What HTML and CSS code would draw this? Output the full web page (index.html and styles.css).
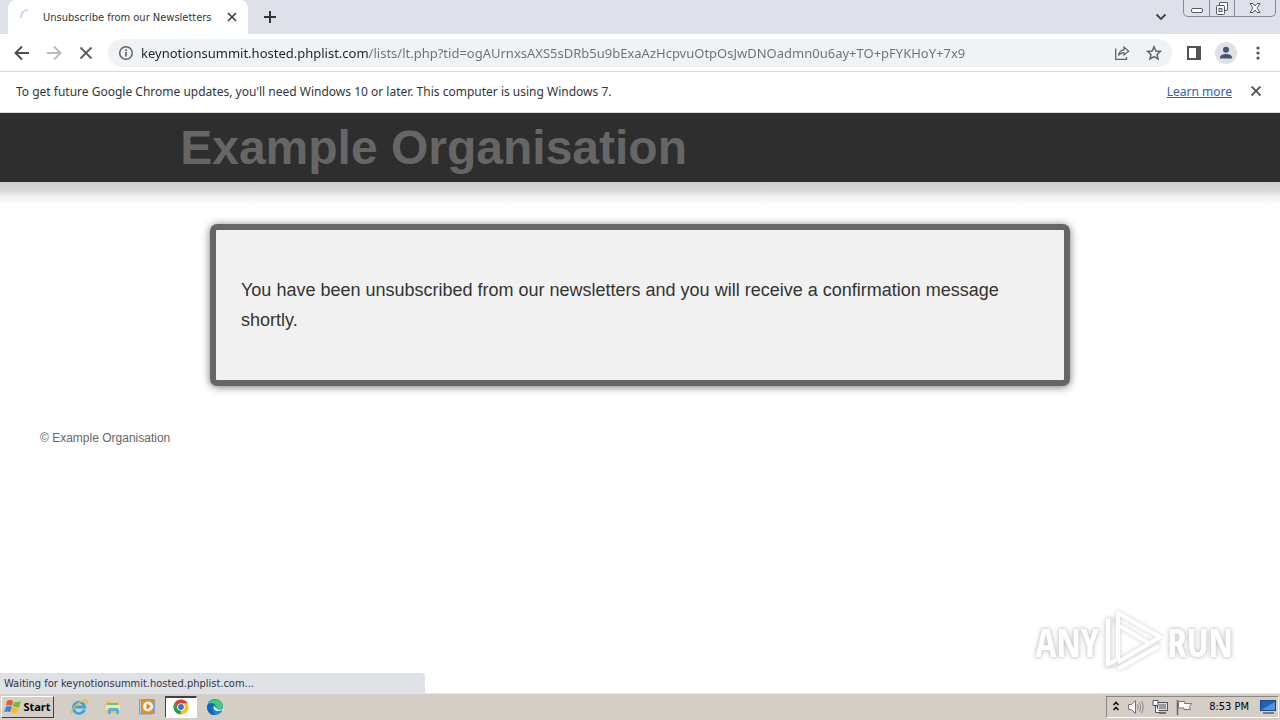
FILE: index.html
```html
<!DOCTYPE html>
<html lang="en">
<head>
<meta charset="utf-8">
<title>Unsubscribe from our Newsletters</title>
<link rel="stylesheet" href="styles.css">
</head>
<body>
<div class="desktop">
  <header class="tabstrip">
    <div class="tab">
      <svg class="spinner" width="16" height="16" viewBox="0 0 16 16"><path d="M1 9A7 7 0 0 1 8 1" fill="none" stroke="#c3cff2" stroke-width="1.6"/></svg>
      <span class="tab-title">Unsubscribe from our Newsletters</span>
      <button class="icon-btn tab-close" aria-label="Close tab"><svg width="10" height="10" viewBox="0 0 10 10"><path d="M1 1L9 9M9 1L1 9" stroke="#3c4043" stroke-width="1.7"/></svg></button>
    </div>
    <button class="icon-btn new-tab" aria-label="New tab"><svg width="14" height="14" viewBox="0 0 14 14"><path d="M7 1V13M1 7H13" stroke="#303238" stroke-width="2"/></svg></button>
    <button class="icon-btn tab-search" aria-label="Search tabs"><svg width="12" height="8" viewBox="0 0 12 8"><path d="M1.500 1.500L6 6L10.500 1.500" fill="none" stroke="#3c4043" stroke-width="1.8"/></svg></button>
    <div class="window-controls">
      <button class="win-btn" aria-label="Minimize"><svg width="14" height="16" viewBox="0 0 14 16"><rect x="1.500" y="8.500" width="11" height="4" rx="1.500" fill="#fff" stroke="#555a66"/></svg></button>
      <button class="win-btn" aria-label="Restore"><svg width="14" height="16" viewBox="0 0 14 16"><path d="M4.500 5V3Q4.500 2.500 5 2.500H12Q12.500 2.500 12.500 3V10Q12.500 10.500 12 10.500H10" fill="#fff" stroke="#555a66"/><rect x="1.500" y="5.500" width="8" height="9" rx="1" fill="#fff" stroke="#555a66"/><rect x="4" y="8.500" width="3" height="3" fill="#dee1e9" stroke="#555a66"/></svg></button>
      <button class="win-btn win-close" aria-label="Close"><svg width="14" height="16" viewBox="0 0 14 16"><path d="M2 3.500H5L7 6L9 3.500H12L9 8L12 12.500H9L7 10L5 12.500H2L5 8Z" fill="#fff" stroke="#555a66"/></svg></button>
    </div>
  </header>

  <nav class="toolbar">
    <button class="icon-btn nav-btn" aria-label="Back"><svg width="16" height="16" viewBox="0 0 16 16"><path d="M15 8H2M8 1.500L1.500 8L8 14.500" fill="none" stroke="#4a4d51" stroke-width="1.900"/></svg></button>
    <button class="icon-btn nav-btn" aria-label="Forward"><svg width="16" height="16" viewBox="0 0 16 16"><path d="M1 8H14M8 1.500L14.500 8L8 14.500" fill="none" stroke="#b9babc" stroke-width="1.900"/></svg></button>
    <button class="icon-btn nav-btn" aria-label="Stop"><svg width="14" height="14" viewBox="0 0 14 14"><path d="M1.500 1.500L12.500 12.500M12.500 1.500L1.500 12.500" stroke="#5a5d61" stroke-width="1.800"/></svg></button>
    <div class="omnibox">
      <button class="icon-btn" aria-label="Site information"><svg width="16" height="16" viewBox="0 0 16 16"><circle cx="8" cy="8" r="6.300" fill="none" stroke="#5f6368" stroke-width="1.500"/><path d="M8 7V11.500M8 4.300V5.900" stroke="#5f6368" stroke-width="1.700"/></svg></button>
      <input class="url" type="text" aria-label="Address" spellcheck="false" value="keynotionsummit.hosted.phplist.com/lists/lt.php?tid=ogAUrnxsAXS5sDRb5u9bExaAzHcpvuOtpOsJwDNOadmn0u6ay+TO+pFYKHoY+7x9">
      <button class="icon-btn" aria-label="Share"><svg width="16" height="16" viewBox="0 0 16 16"><path d="M1.700 3.500V14.300H12.500V12" fill="none" stroke="#5f6368" stroke-width="1.300"/><path d="M4.500 10.500C5 7 7 5 10 4.800V2L14.700 6.300L10 10V7.700C7.500 7.700 6 8.500 4.500 10.500Z" fill="none" stroke="#5f6368" stroke-width="1.200"/></svg></button>
      <button class="icon-btn" aria-label="Bookmark this page"><svg width="16" height="16" viewBox="0 0 16 16"><path d="M8 1.800L9.900 6L14.400 6.400L11 9.400L12 13.900L8 11.500L4 13.900L5 9.400L1.600 6.400L6.100 6Z" fill="none" stroke="#5f6368" stroke-width="1.500"/></svg></button>
    </div>
    <button class="icon-btn tool-btn" aria-label="Side panel"><svg width="14" height="14" viewBox="0 0 14 14"><path d="M0 0H14V14H0ZM2 2V12H9V2Z" fill="#505357" fill-rule="evenodd"/></svg></button>
    <button class="icon-btn tool-btn" aria-label="Profile"><svg width="22" height="22" viewBox="0 0 22 22"><circle cx="11" cy="11" r="11" fill="#dee1e6"/><circle cx="11" cy="7.800" r="3" fill="#47536f"/><path d="M5 16.500V15.500C5 13 8.500 12 11 12S17 13 17 15.500V16.500Z" fill="#47536f"/></svg></button>
    <button class="icon-btn tool-btn" aria-label="Menu"><svg width="4" height="14" viewBox="0 0 4 14"><g fill="#505357"><circle cx="2" cy="2" r="1.600"/><circle cx="2" cy="7" r="1.600"/><circle cx="2" cy="12" r="1.600"/></g></svg></button>
  </nav>

  <aside class="infobar">
    <span>To get future Google Chrome updates, you'll need Windows 10 or later. This computer is using Windows 7.</span>
    <a class="learn" href="#">Learn more</a>
    <button class="icon-btn info-close" aria-label="Dismiss"><svg width="10" height="10" viewBox="0 0 10 10"><path d="M0.500 0.500L9.500 9.500M9.500 0.500L0.500 9.500" stroke="#505357" stroke-width="1.900"/></svg></button>
  </aside>

  <main class="page">
    <div class="masthead"><h1 class="brand">Example Organisation</h1></div>
    <section class="card"><p class="message">You have been unsubscribed from our newsletters and you will receive a confirmation message shortly.</p></section>
    <footer class="copyright">© Example Organisation</footer>
    <div class="watermark">
      <span>ANY</span>
      <svg width="60" height="64" viewBox="0 0 60 64"><g fill="none" stroke="#fff" stroke-width="4" stroke-linejoin="round"><path d="M19 55L55 35M11 12H5V56L13 54" stroke="#e5e5e5" stroke-width="6"/><path d="M5 10V55L13 51M15 60L56 37"/><path d="M15 51V4L57 28L15 53M17 17L47 35"/></g></svg>
      <span>RUN</span>
    </div>
    <div class="status">Waiting for keynotionsummit.hosted.phplist.com...</div>
  </main>

  <footer class="taskbar">
    <button class="start"><svg width="18" height="16" viewBox="0 0 18 16"><path d="M3 2Q6 0 9 2L8 7Q5 5 2 7Z" fill="#e95b25"/><path d="M10 3Q13 4 17 2L15 8Q12 9 9 7Z" fill="#75b83c"/><path d="M2 8Q5 6 8 8L6 13Q3 12 0 13Z" fill="#3f83cc"/><path d="M9 8Q12 10 15 9L13 14Q10 15 7 13Z" fill="#f6bb2f"/></svg>Start</button>
    <button class="task" aria-label="Internet Explorer"><svg width="18" height="18" viewBox="0 0 18 18"><path d="M14.500 11.500A5.700 5.700 0 1 1 14.700 9H5" fill="none" stroke="#3ba5df" stroke-width="2.800"/><path d="M2 16C-1 13 9 3 15.500 2C18 2 17 4 16 5.500" fill="none" stroke="#e6bb3c" stroke-width="1.400"/></svg></button>
    <button class="task" aria-label="File Explorer"><svg width="18" height="18" viewBox="0 0 18 18"><path d="M2 3H7L8 4.500H15V15H2Z" fill="#e6c65c"/><path d="M3 5H14V8H3Z" fill="#6cc09a"/><path d="M2 7H16V12H2Z" fill="#f9e59b"/><path d="M4 16V12Q4 10 6 10H13Q15 10 15 12V16H12V13H7V16Z" fill="#5eaedc"/></svg></button>
    <button class="task" aria-label="Media Player"><svg width="18" height="18" viewBox="0 0 18 18"><rect x="1.500" y="2" width="12" height="14" fill="#a8ceed" stroke="#6ca2d2"/><rect x="3.500" y="1.500" width="13" height="14" fill="#f18a1d" stroke="#75a6d2"/><circle cx="10" cy="8.500" r="5" fill="#fff"/><path d="M8.500 5.500L13 8.500L8.500 11.500Z" fill="#f07812"/></svg></button>
    <button class="task task-active" aria-label="Chrome"><svg width="16" height="16" viewBox="0 0 16 16"><circle cx="8" cy="8" r="7.500" fill="#fbc116"/><path d="M1.500 4.250A7.500 7.500 0 0 1 14.500 4.250H8L4.750 9.900Z" fill="#e33b2e"/><path d="M1.500 4.250L4.750 9.900L8 11.750L7.500 15.500A7.500 7.500 0 0 1 1.500 4.250Z" fill="#269b4a"/><circle cx="8" cy="8" r="3.800" fill="#fff"/><circle cx="8" cy="8" r="2.900" fill="#2d73dc"/></svg></button>
    <button class="task" aria-label="Edge"><svg width="18" height="18" viewBox="0 0 18 18"><circle cx="9" cy="9" r="8" fill="#168bd3"/><path d="M2 6C5 0 16 0 17 8C17 12 12 12 10.500 10.500C12 7 6 4 2 6Z" fill="#46c77b"/><path d="M1 9C1 5 7 4 9 7C5 7 5 14 10 16.900C5 18 1 14 1 9Z" fill="#1266b8"/><path d="M8 8C6 12 12 14.500 16 12L17 13L18 9.500C17 12 12 12.500 10.500 10.500Z" fill="#e5eef0"/></svg></button>
    <div class="tray">
      <button class="icon-btn" aria-label="Show hidden icons"><svg width="8" height="12" viewBox="0 0 8 12"><path d="M1.500 4L4 1.500L6.500 4M1.500 9L4 6.500L6.500 9" fill="none" stroke="#111" stroke-width="1.600"/></svg></button>
      <svg width="18" height="16" viewBox="0 0 18 16"><path d="M1.500 5.500H4.500L8.500 1.500V14.500L4.500 10.500H1.500Z" fill="#fff" stroke="#777"/><path d="M10.500 5.500Q12 8 10.500 10.500M12.500 3.500Q15 8 12.500 12.500M14.500 2Q18 8 14.500 14" fill="none" stroke="#888"/></svg>
      <svg width="16" height="16" viewBox="0 0 16 16"><rect x="5.500" y="3.500" width="10" height="8" fill="#ddd" stroke="#555"/><rect x="7" y="5" width="7" height="5" fill="#999"/><path d="M7 14H14" stroke="#555" stroke-width="1.500"/><path d="M1 1.500H6V6.500H1ZM3.500 7V13.500H8" fill="#fff" stroke="#555"/></svg>
      <svg width="18" height="16" viewBox="0 0 18 16"><path d="M2.500 1V16" stroke="#666" stroke-width="1.500"/><path d="M3.500 2.500H9.500V4.500H16.500L14.500 7.500L15.500 10.500H9V9H3.500Z" fill="#fff" stroke="#777"/></svg>
      <time class="clock">8:53 PM</time>
      <svg width="16" height="16" viewBox="0 0 16 16"><rect x="0.500" y="1.500" width="15" height="10" fill="#1f62b5" stroke="#1a488a"/><path d="M1 11L15 3V11Z" fill="#4f94dc"/><path d="M3 14H14" stroke="#6b7c91" stroke-width="2"/></svg>
    </div>
  </footer>
</div>
</body>
</html>
```
FILE: styles.css
```css
* { box-sizing: border-box; }
body { margin: 0; background: #fff; }
button { font: inherit; border: 0; padding: 0; background: none; display: flex; align-items: center; justify-content: center; }
svg { display: block; flex: none; }
.desktop { display: flex; flex-direction: column; min-height: 100vh; font-family: "Noto Sans", sans-serif; font-size: 12px; color: #333639; }

.tabstrip { display: flex; height: 34px; padding-left: 8px; background: #dee1e9; }
.tab { display: flex; align-items: center; width: 240px; padding: 0 10px 0 12px; background: #fff; border-radius: 8px 8px 0 0; }
.tab-title { margin-left: 7px; font-family: "DejaVu Sans Condensed", "DejaVu Sans", sans-serif; font-size: 11px; white-space: nowrap; }
.tab-close { width: 12px; margin-left: auto; }
.new-tab { width: 28px; margin-left: 8px; }
.tab-search { width: 28px; margin-left: auto; margin-right: 8px; }
.window-controls { display: flex; height: 17px; margin-right: 4px; border: 1px solid #858994; border-top: 0; border-radius: 0 0 5px 5px; }
.win-btn { width: 25px; }
.win-btn + .win-btn { border-left: 1px solid #858994; }
.win-close { width: 41px; }

.toolbar { display: flex; align-items: center; height: 38px; padding: 0 6px; border-bottom: 1px solid #d9dadc; }
.nav-btn { width: 32px; height: 32px; }
.omnibox { display: flex; align-items: center; flex: 1; gap: 16px; height: 28px; margin: 0 6px; padding: 0 10px; border-radius: 14px; background: #f0f3f5; }
.url { flex: 1; min-width: 0; margin-left: -9px; padding: 0; border: 0; outline: 0; font-family: "Noto Sans", sans-serif; font-size: 13px; color: #5f6368; background: linear-gradient(90deg, #202124 228px, #6b6f74 228px); background-clip: text; -webkit-background-clip: text; -webkit-text-fill-color: transparent; }
.tool-btn { width: 32px; height: 32px; }

.infobar { display: flex; align-items: center; height: 41px; padding: 0 16px 2px; border-bottom: 1px solid #d9dadc; font-size: 12px; white-space: nowrap; }
.learn { margin-left: auto; color: #2a62c4; }
.info-close { width: 16px; margin-left: 16px; }

.page { position: relative; display: flex; flex-direction: column; flex: 1; font-family: "Liberation Sans", Arial, sans-serif; }
.masthead { height: 92px; padding-left: 14%; background: linear-gradient(#2e2e2e 69px, #d1d1d1 69px, #d8d8d8 77px, #f2f2f2 84px, #fff 92px); }
.brand { margin: 0; padding-left: 1px; font-size: 48px; line-height: 69px; color: #666; }
.card { width: 860px; max-width: 90%; margin: 19px auto 0; padding: 45px 25px; border: 6px solid #666; border-radius: 7px; background: #f1f1f1; box-shadow: 0 1px 8px #777; }
.message { margin: 0; font-size: 18px; line-height: 30px; color: #333; }
.copyright { margin: 44px 40px 0; font-size: 12px; line-height: 16px; color: #666; }
.watermark { position: absolute; right: 47px; bottom: 20px; display: flex; align-items: center; gap: 4px; font-family: "Liberation Sans Narrow", "Open Sans Condensed", "Roboto Condensed", "Open Sans", sans-serif; font-size: 39px; color: #fff; text-shadow: 0 0 3px #ccc; filter: drop-shadow(0 0 2px #ccc); }
.status { width: 425px; max-width: 60%; height: 20px; margin-top: auto; padding-left: 4px; border-radius: 0 4px 0 0; background: #dee1e6; font-family: "DejaVu Sans Condensed", "DejaVu Sans", sans-serif; font-size: 11px; line-height: 21px; }

.taskbar { display: flex; align-items: center; height: 27px; padding: 1px 1px 2px; border-top: 1px solid #e8e5df; background: #d5cec6; }
.start { width: 53px; height: 22px; gap: 1px; border: 1px solid; border-color: #fff #404040 #404040 #fff; font-family: "Noto Sans", sans-serif; font-size: 11px; font-weight: 700; color: #000; margin-right: 9px; }
.task { width: 32px; height: 22px; margin-right: 2px; }
.task-active { background: #fff; border: 1px solid; border-color: #404040 #fff #fff #404040; border-top-width: 2px; }
.tray { display: flex; align-items: center; gap: 7px; height: 22px; margin-left: auto; padding: 0 2px 0 5px; border: 1px solid; border-color: #8c8780 #fff #fff #8c8780; }
.clock { margin: 0 4px 0 9px; font-family: "DejaVu Sans Condensed", sans-serif; font-size: 11px; color: #000; white-space: nowrap; }
```
